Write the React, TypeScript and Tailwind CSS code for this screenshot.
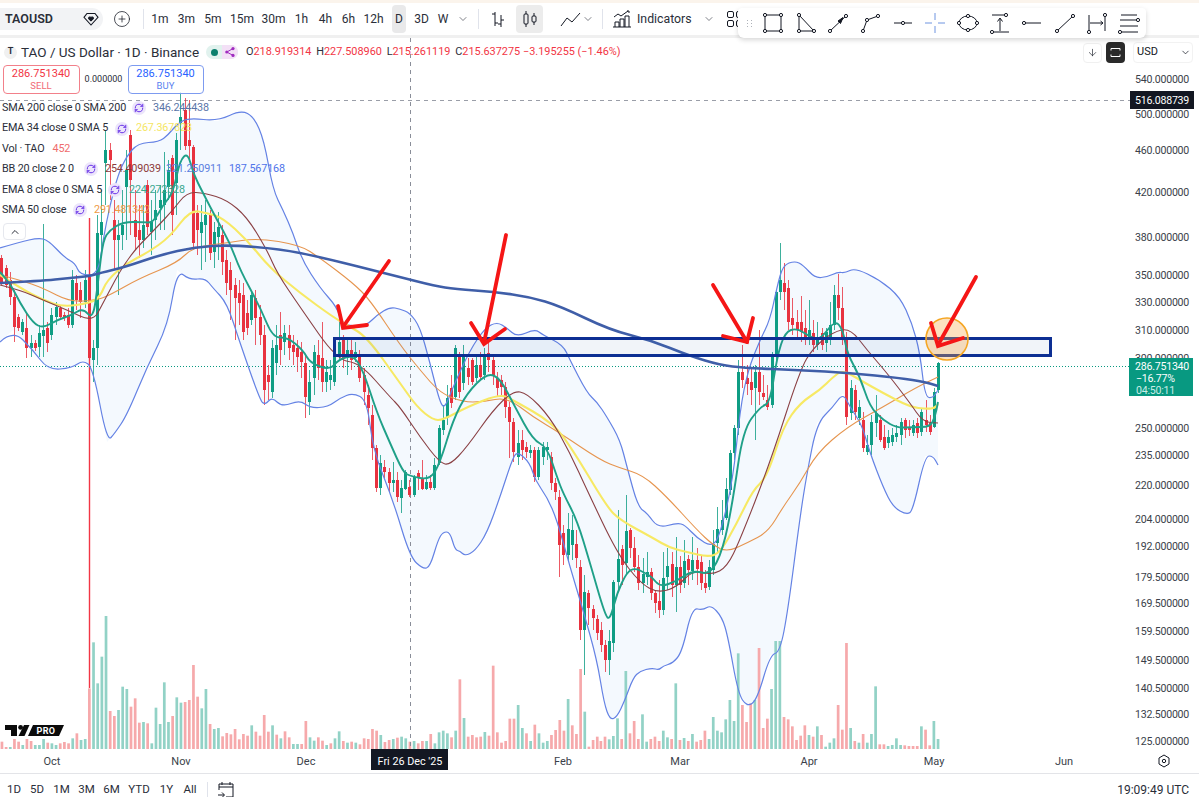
import { ChevronDown, ChevronUp, ArrowDown, CirclePlus, RefreshCw } from 'lucide-react'

const intervals = [
  { label: '1m', w: 'w-[26px]' },
  { label: '3m', w: 'w-[27px]' },
  { label: '5m', w: 'w-[26px]' },
  { label: '15m', w: 'w-[32px]' },
  { label: '30m', w: 'w-[31px]' },
  { label: '1h', w: 'w-[25px]' },
  { label: '4h', w: 'w-[23px]' },
  { label: '6h', w: 'w-[23px]' },
  { label: '12h', w: 'w-[27px]' },
  { label: 'D', w: 'w-[24px]', active: true },
  { label: '3D', w: 'w-[21px]' },
  { label: 'W', w: 'w-[22px]' },
]

const ranges = [
  { label: '1D', w: 'w-[22px]' },
  { label: '5D', w: 'w-[24px]' },
  { label: '1M', w: 'w-[25px]' },
  { label: '3M', w: 'w-[25px]' },
  { label: '6M', w: 'w-[25px]' },
  { label: 'YTD', w: 'w-[30px]' },
  { label: '1Y', w: 'w-[25px]' },
  { label: 'All', w: 'w-[22px]' },
]

const prices: [string, number][] = [
  ['540.000000', 79], ['500.000000', 114], ['460.000000', 150], ['420.000000', 192], ['380.000000', 237],
  ['350.000000', 275], ['330.000000', 302], ['310.000000', 330], ['300.000000', 358], ['250.000000', 428], ['235.000000', 455],
  ['220.000000', 485], ['204.000000', 519], ['192.000000', 546], ['179.500000', 577], ['169.500000', 603],
  ['159.500000', 631], ['149.500000', 660], ['140.500000', 688], ['132.500000', 714], ['125.000000', 741],
]

const months: [string, number][] = [
  ['Oct', 52], ['Nov', 181], ['Dec', 306], ['Feb', 563], ['Mar', 680], ['Apr', 809], ['May', 934], ['Jun', 1064],
]

// volume tops as read off the chart: positive = green bar, negative = red bar, 447 is the base line
const volLeft = [
  -425, -441, 441, -417, -425, 435, -417, -423, 435, 435, 417, -428, 430, 435, -430, -426, -430, 415, -400, 420, 417,
  -265, 127, 250, 170, 48, -333, -348, 330, 260, 267, -320, -295, -368, 366, -370, 430, 323, 372, 247, 366, -348, 292,
  308, -306, -300, -195, -290, 325, 267, -372, 387, 384, -409, -399, -403, -387, -418, -402, -407, 376, -395, -407,
  -345, -395, 376, -404, 415, -394, -412, 432, 432, -432, -363, 412, 422, -412, -422, 435, -430, 415, 394, -423, 428,
  -425, 428, -433, -415, -417, -387, -392, 405, -426, -420, 417, -413, 410, 415, -425, 423, -430, -423, 423, -402,
  430, 397, 392, 400, -412, 392, -238, 354, -410, -405, -412, -410, 396, -407, -197, -397, -428, -423, -356, -356,
  315, 384, -400, 423, -374, 400, 428, 423, -405, -390, -360, -392, 297, -376, -402, -207, 335, -440, -420, -410,
]
const volRight = [
  -423, -410, 418, 408, 355, -417, 213, -400, -363, -417, 343, 425, -417, -410, -423, 392, 412, -417, 250, -420, 414,
  -423, 402, -425, -420, -392, 417, 351, 392, 397, 358, 300, 363, 160, -315, -366, -310, 300, -144, -384, -356, 267,
  123, 123, -351, -358, -379, -420, -407, -376, 405, -410, 379, -405, 440, 428, 415, -315, -389, -129, 384, -423, 428,
  -402, 428, 402, 259, -433, -433, 438, 435, 415, 435, -436, -438, -438, -438, 379, -389, -436, 363, 417,
]

// [x, up, bodyTop, bodyBottom, wickTop, wickBottom]
const candles: number[][] = [
  [2,0,258,282],[6,0,268,285],[10,0,280,297,272,305],[15,0,297,327,290,342],[19,0,317,328],[23,1,322,332],[27,0,328,348,312,358],
  [31,1,343,348,335,357],[36,0,343,348],[39,1,333,347,325,357],[44,1,330,336,224,357],[48,0,328,343,322,352],[52,1,315,335,308,340],
  [56,1,307,317,302,325],[60,0,308,317],[65,0,315,318],[69,0,315,325,308,328],[73,1,280,325,270,328],[77,0,283,300,275,310],[81,0,290,302,282,318],
  [85,1,280,302,270,308],[90,0,277,358,218,688],[94,1,348,360,340,382],[98,1,233,348,215,365],[102,1,222,235,190,250],[107,1,150,163,130,205],
  [111,0,150,160,143,200],[115,0,220,240,200,270],[119,1,235,240,220,295],[123,1,225,235,190,250],[127,1,170,187,150,240],[131,0,135,180,130,235],
  [135,0,220,237,190,250],[140,0,230,240,205,258],[144,1,225,240,205,248],[148,0,185,227,180,235],[152,1,222,232,200,255],[156,1,210,220,190,240],
  [160,1,200,208,185,230],[164,1,190,205,152,230],[169,1,170,187,160,200],[173,0,158,215,155,235],[177,1,140,183,133,215],[182,1,117,123,92,150],
  [186,0,110,146,98,150],[190,0,140,146,100,160],[193,0,147,243,145,250],[197,0,213,230,205,255],[202,1,222,233,205,270],[206,1,215,225,200,262],
  [210,0,215,253,210,260],[214,1,232,252,222,268],[219,1,227,237,212,260],[223,0,235,262,225,275],[227,0,260,283,250,295],[231,0,270,290,262,320],
  [236,0,285,298,278,340],[240,0,293,303,280,325],[244,0,295,332,283,340],[249,0,313,328,300,335],[253,1,295,320,292,325],[257,0,298,318,290,345],
  [261,0,317,335,305,345],[265,0,335,390,325,405],[269,0,375,382,365,400],[273,1,348,392,340,398],[278,1,345,363,325,375],[281,0,335,350,312,365],
  [285,1,333,342,325,355],[290,0,335,348,325,360],[295,0,345,352,335,365],[299,0,348,357,340,372],[303,0,352,362,342,378],[306,0,363,397,355,418],
  [310,1,382,402,370,415],[314,1,352,378,345,395],[319,0,355,368,340,380],[323,0,358,382,322,392],[327,1,372,382,360,392],[332,1,375,380,360,390],
  [336,1,352,382,345,386],[340,1,342,355,322,360],[344,0,340,358,335,368],[348,1,350,358,337,375],[352,0,350,360,338,370],[356,1,352,358,342,362],
  [360,0,355,378,350,382],[364,0,375,392,368,405],[368,0,395,408,385,425],[372,0,415,448,405,460],[377,0,448,488,445,492],[381,1,463,488,455,495],
  [385,0,467,472,460,478],[389,0,472,483,468,492],[393,1,480,483,462,492],[397,0,480,497,472,502],[402,1,488,498,480,513],[406,1,472,489,470,490],
  [410,0,487,495,480,497],[414,1,477,495,475,497],[419,0,473,477,470,490],[423,0,478,489,460,490],[427,1,482,489,475,490],[431,0,482,488,475,490],
  [435,1,465,488,458,490],[439,1,428,463,425,465],[443,1,420,430,405,435],[448,1,398,418,385,425],[452,0,388,403,375,408],[456,1,348,397,345,400],
  [461,0,355,392,352,398],[464,1,355,383,345,390],[468,0,368,377,358,385],[472,0,360,382,358,385],[477,1,365,378,355,382],[481,0,365,377,352,380],
  [485,1,357,375,348,380],[489,0,353,360,343,372],[494,0,360,375,355,385],[498,0,378,388,372,397],[502,0,380,387,375,395],[506,0,387,407,382,418],
  [510,0,407,422,402,458],[514,0,422,452,418,462],[518,1,443,457,430,465],[522,0,440,450,430,460],[527,0,447,452,442,458],[531,1,450,453,445,458],
  [535,0,450,477,447,482],[539,1,450,477,447,480],[543,1,447,457,442,465],[547,1,447,450,442,460],[552,0,457,483,452,490],[556,0,483,492,478,500],
  [560,0,497,545,490,577],[564,0,533,555,525,565],[568,1,529,555,513,562],[572,1,530,545,515,560],[577,0,544,558,530,568],[581,0,567,630,560,640],
  [585,1,592,630,575,675],[589,0,593,608,590,625],[593,0,609,618,605,630],[597,0,619,633,615,640],[601,0,630,645,622,652],[606,0,645,660,640,672],
  [610,1,641,660,630,675],[614,1,582,643,580,652],[618,1,559,582,510,590],[622,0,549,565,545,585],[626,1,531,563,495,575],[630,0,530,548,528,558],
  [635,0,548,567,537,572],[639,0,567,583,555,590],[643,1,574,583,558,593],[647,1,572,577,552,585],[652,0,572,593,568,600],[656,0,593,603,590,613],
  [660,0,601,610,580,618],[664,1,578,610,552,615],[668,1,566,577,548,590],[672,0,564,585,552,597],[677,1,567,585,537,612],[681,0,567,585,556,593],
  [685,1,561,583,540,588],[689,0,559,570,555,585],[693,1,560,571,537,580],[697,0,560,569,548,585],[701,0,562,583,555,590],[706,0,583,588,570,593],
  [710,1,567,587,560,590],[714,1,544,570,530,575],[718,1,529,543,507,552],[722,1,520,530,500,535],[727,1,489,518,478,520],[731,1,453,490,450,495],
  [735,1,428,453,425,460],[739,1,372,428,360,435],[743,0,372,380,345,388],[747,0,378,384,365,395],[751,0,382,390,368,405],[755,1,372,388,365,440],
  [760,0,372,392,330,405],[764,0,393,397,375,400],[768,0,400,407,385,410],[772,1,357,405,352,408],[776,1,292,357,290,360],[780,1,280,292,243,300],
  [784,0,283,292,263,310],[788,0,288,322,280,330],[793,0,318,325,298,335],[797,0,322,330,310,340],[801,0,322,332,296,342],[805,0,328,337,310,345],
  [809,1,330,340,300,345],[813,0,333,345,320,352],[818,1,337,345,322,350],[822,0,333,345,328,350],[826,1,332,343,328,352],[830,1,325,337,302,345],
  [834,1,295,325,285,330],[838,0,295,308,274,320],[843,0,308,340,287,345],[847,0,340,417,332,425],[851,1,388,413,380,420],[855,0,390,412,385,420],
  [859,1,407,418,400,425],[863,0,420,448,412,452],[868,1,445,452,435,455],[872,1,422,445,415,455],[876,1,413,423,395,437],[880,0,420,440,415,442],
  [885,0,437,448,425,450],[889,1,437,443,430,448],[893,1,435,442,428,446],[897,1,433,437,425,442],[901,1,422,435,418,445],[905,0,420,430,418,438],
  [909,0,427,430,420,436],[914,1,425,433,420,436],[918,0,423,433,418,438],[922,1,412,432,408,436],[926,0,420,425,400,432],[930,0,423,432,415,435],
  [934,1,392,427,388,428],[938,1,363,390,362,393],
]

const fmt = (pts: string) => pts.trim().split(/\s+/)

// rounds the corners of the read-off points, midpoint to midpoint
function smooth(pts: string) {
  const p = fmt(pts).map((s) => s.split(',').map(Number))
  let d = `M${p[0][0]} ${p[0][1]}`
  for (let i = 1; i < p.length - 1; i++) {
    d += ` Q${p[i][0]} ${p[i][1]} ${(p[i][0] + p[i + 1][0]) / 2} ${(p[i][1] + p[i + 1][1]) / 2}`
  }
  const last = p[p.length - 1]
  return `${d} L${last[0]} ${last[1]}`
}

const bbUpper =
  '0,248 20,242 38,238 48,240 65,258 75,263 80,275 98,275 103,240 110,205 118,175 126,157 138,143 159,142 168,135 178,123 189,118 218,121 241,110 254,117 264,140 273,190 283,210 293,233 302,260 320,288 337,307 342,324 355,326 367,325 377,315 390,307 400,309 410,313 420,327 430,363 440,403 445,408 453,387 470,350 485,328 497,322 507,328 517,337 535,329 543,335 563,345 570,360 587,393 597,402 607,417 620,440 627,467 638,507 647,513 658,528 677,523 685,525 697,538 712,547 720,535 733,480 740,410 748,370 760,340 770,320 777,287 783,265 795,261 803,265 815,278 827,277 838,272 845,273 855,268 880,280 900,297 912,323 920,353 925,397 933,398 938,390'
const bbLower =
  '0,342 13,330 33,350 48,370 72,368 83,360 93,368 107,442 115,433 127,415 147,367 168,325 177,270 190,280 205,278 213,288 227,303 240,343 260,400 265,405 272,397 282,407 300,400 310,408 328,407 340,398 353,393 367,400 373,450 393,500 410,557 423,569 430,567 438,540 443,532 450,532 455,550 460,551 465,556 475,551 487,533 500,497 513,457 518,452 530,463 535,480 547,497 557,520 570,567 583,610 597,660 604,703 610,720 617,717 625,700 633,678 640,671 652,668 659,670 663,666 673,663 682,652 692,608 703,610 711,605 722,617 728,637 738,693 747,707 757,700 770,655 780,652 788,610 800,517 807,473 817,423 833,407 843,393 850,407 862,425 870,453 883,487 893,507 907,515 913,510 925,456 933,456 938,465'
const bbFill = `${bbUpper} ${fmt(bbLower).reverse().join(' ')}`

const sma200 =
  '0,283 40,281 70,278 90,276 100,273 125,267 160,255 195,247 230,245 280,249 320,257 400,277 435,286 455,289 495,292 530,297 560,306 610,330 650,340 690,356 720,365 745,368 800,370 850,373 900,378 925,382 938,386'
const ema8 =
  '0,272 10,283 20,303 33,323 43,328 57,320 72,315 83,308 93,320 98,283 103,240 110,230 123,222 143,222 153,223 163,205 173,193 180,160 188,153 193,173 203,193 217,220 230,243 240,270 260,307 273,338 287,337 303,350 310,363 330,370 338,360 353,355 363,370 377,413 390,443 403,472 410,476 430,480 440,463 453,420 467,393 487,373 500,378 515,407 533,440 547,447 557,477 563,493 577,520 590,563 605,615 610,620 617,593 627,572 635,568 645,573 652,577 660,587 677,581 693,570 710,575 723,550 733,500 743,430 760,407 770,403 777,357 785,332 797,328 810,337 820,340 835,320 843,330 847,353 860,377 870,407 883,420 897,428 913,427 930,427 935,417 938,402'
const ema34 =
  '0,275 20,288 43,300 63,307 90,303 100,297 107,280 127,263 147,253 170,237 190,210 207,213 223,218 247,240 270,268 300,293 333,317 347,325 367,337 400,383 417,407 433,420 443,420 467,407 500,394 513,400 553,423 573,450 607,507 620,520 653,538 670,548 687,552 708,557 720,553 737,523 753,490 767,477 783,427 800,403 820,390 833,377 843,370 860,380 883,393 910,407 927,409 935,408 938,404'
const bbBasis =
  '0,285 20,290 43,300 67,310 93,322 103,303 127,258 157,227 173,210 187,192 205,193 227,200 247,217 267,250 277,273 300,307 337,360 360,363 390,397 400,407 420,437 440,463 450,465 467,447 493,410 513,391 527,393 550,417 570,453 587,490 617,553 640,583 658,593 677,587 693,570 712,575 727,567 740,540 770,463 800,370 813,348 833,332 850,328 867,350 887,373 910,403 923,422 938,423'
const sma50 =
  '0,275 20,280 43,288 70,302 97,300 110,295 140,278 177,263 193,247 227,243 257,238 300,245 320,258 353,283 370,300 400,345 420,370 440,393 463,402 483,402 507,397 533,417 560,433 600,460 620,468 643,475 667,497 697,530 713,545 727,552 747,543 768,532 783,507 800,483 817,453 847,427 883,407 917,387 938,377'

const arrows = [
  ['389,261 343,327', '338,306 343,328 367,325'],
  ['506,235 484,343', '471,323 484,344 505,329'],
  ['713,285 747,342', '723,336 747,342 753,318'],
  ['976,277 938,345', '931,323 938,346 963,338'],
]

function snap(x: number) {
  return Math.floor(Math.round((x - 1.9) / 4.163) * 4.163 + 1.9) + 0.5
}

function Chart() {
  return (
    <svg width="1199" height="735" viewBox="0 38 1199 735" className="block" fontFamily="Roboto, sans-serif">
      <polygon points={bbFill} fill="#f4f9fe" />
      {volLeft.map((v, i) => (
        <rect key={i} x={0.6 + i * 4.163} y={600 + Math.abs(v) / 3} width="2.7" height={(447 - Math.abs(v)) / 3} fill={v > 0 ? '#92d2c6' : '#f6a9ab'} />
      ))}
      {volRight.map((v, i) => (
        <rect key={i} x={599.5 + i * 4.163} y={600 + Math.abs(v) / 3} width="2.7" height={(447 - Math.abs(v)) / 3} fill={v > 0 ? '#92d2c6' : '#f6a9ab'} />
      ))}
      <line x1="0" y1="366.5" x2="1130" y2="366.5" stroke="#089981" strokeWidth="1" strokeDasharray="1 2" />
      <line x1="410.5" y1="38" x2="410.5" y2="749" stroke="#8a8e99" strokeWidth="1" strokeDasharray="4 4" />
      <line x1="0" y1="100.5" x2="1130" y2="100.5" stroke="#9a9ea8" strokeWidth="1" strokeDasharray="4 4" />
      {candles.map(([x, up, t, b, wt, wb], i) => {
        const cx = snap(x)
        const c = up ? '#0f9d84' : '#e8323f'
        const long = (wb ?? 0) - (wt ?? 0) > 200
        return (
          <g key={i}>
            <line x1={cx} y1={wt ?? t - 3} x2={cx} y2={wb ?? b + 3} stroke={long ? '#f23645' : c} strokeWidth={long ? 1.4 : 1} opacity={long ? 1 : 0.8} />
            <rect x={cx - 1.5} y={t} width="3" height={Math.max(b - t, 1.5)} fill={c} />
          </g>
        )
      })}
      <path d={smooth(bbUpper)} fill="none" stroke="#6482e4" strokeWidth="1.2" />
      <path d={smooth(bbLower)} fill="none" stroke="#6482e4" strokeWidth="1.2" />
      <path d={smooth(sma50)} fill="none" stroke="#e6954f" strokeWidth="1.1" />
      <path d={smooth(ema34)} fill="none" stroke="#f7e964" strokeWidth="2.1" />
      <path d={smooth(bbBasis)} fill="none" stroke="#8a4044" strokeWidth="1.1" />
      <path d={smooth(ema8)} fill="none" stroke="#1fa088" strokeWidth="1.9" />
      <path d={smooth(sma200)} fill="none" stroke="#3f5ea8" strokeWidth="2.6" />
      <rect x="334.5" y="338.5" width="716" height="17" fill="#3f66b0" fillOpacity="0.07" stroke="#0d2f93" strokeWidth="3" />
      <circle cx="947" cy="339" r="21" fill="#f5a94a" fillOpacity="0.35" stroke="#f5a623" strokeWidth="1.6" />
      {arrows.map(([shaft, head], i) => (
        <g key={i} fill="none" stroke="#f51616" strokeWidth="3.8" strokeLinecap="round" strokeLinejoin="miter">
          <polyline points={shaft} />
          <polyline points={head} />
        </g>
      ))}
      <path d="M5 725h12v11h-6v-6H5z" fill="#0b0b0b" />
      <circle cx="20.6" cy="727.4" r="2.4" fill="#0b0b0b" />
      <path d="M24 725h5.5l-5 11h-6z" fill="#0b0b0b" />
      <path d="M33 725h31l-5 11H28z" fill="#0b0b0b" />
      <text x="46" y="734" fontSize="9" fontWeight="700" fill="#ffffff" textAnchor="middle" letterSpacing="0.4">PRO</text>
      {prices.map(([p, y]) => (
        <text key={p} x="1189" y={y + 4} fontSize="10.6" letterSpacing="-0.25" textAnchor="end" fill="#3b3f4a">{p}</text>
      ))}
      {months.map(([m, x]) => (
        <text key={m} x={x} y="765" fontSize="11" textAnchor="middle" fill="#3b3f4a">{m}</text>
      ))}
      <rect x="1130" y="91" width="64" height="18" fill="#131722" />
      <text x="1189" y="104" fontSize="10.6" letterSpacing="-0.25" textAnchor="end" fill="#ffffff">516.088739</text>
      <rect x="1129" y="358" width="64" height="38" fill="#089981" />
      <text x="1189" y="370" fontSize="10.6" letterSpacing="-0.25" textAnchor="end" fill="#ffffff">286.751340</text>
      <text x="1136" y="382" fontSize="10.6" letterSpacing="-0.25" fill="#ffffff">−16.77%</text>
      <text x="1136" y="394" fontSize="10.6" letterSpacing="-0.25" fill="#c8ece5">04:50:11</text>
      <rect x="371" y="749" width="77" height="21" fill="#131722" />
      <text x="410" y="765" fontSize="10.8" textAnchor="middle" fill="#ffffff">Fri 26 Dec '25</text>
      <g fill="none" stroke="#131722" strokeWidth="1">
        <path d="M1164 755l5 3v6l-5 3-5-3v-6z" />
        <circle cx="1164" cy="761" r="1.7" />
      </g>
    </svg>
  )
}

function Handle({ cx, cy }: { cx: number; cy: number }) {
  return <circle cx={cx} cy={cy} r="1.6" fill="#fff" />
}

function ToolIcon({ children }: { children: React.ReactNode }) {
  return (
    <div className="flex w-[32.4px] justify-center">
      <svg width="22" height="22" viewBox="0 0 22 22" fill="none" stroke="#131722" strokeWidth="1">
        {children}
      </svg>
    </div>
  )
}

function Tools() {
  return (
    <div className="absolute left-[738px] top-[5px] z-10 flex h-[30px] w-[408px] items-center rounded-b-md rounded-t-sm bg-white pl-[3px] shadow-[0_2px_5px_rgba(0,0,0,0.16)]">
      <div className="grid w-[16px] grid-cols-2 justify-items-center gap-y-[2px] px-[4px] opacity-40">
        {[0, 1, 2, 3, 4, 5].map((d) => (
          <span key={d} className="h-px w-px bg-gray-700" />
        ))}
      </div>
      <ToolIcon>
        <path d="M3 3h16v16H3z" />
        <Handle cx={3} cy={3} /><Handle cx={19} cy={3} /><Handle cx={3} cy={19} /><Handle cx={19} cy={19} />
      </ToolIcon>
      <ToolIcon>
        <path d="M4 3v16h15z" />
        <Handle cx={4} cy={3} /><Handle cx={4} cy={19} /><Handle cx={19} cy={19} />
      </ToolIcon>
      <ToolIcon>
        <path d="M3 19L19 4" />
        <path d="M11 9l5-3.5-2.5 6z" fill="#131722" />
        <Handle cx={3} cy={19} /><Handle cx={19} cy={4} />
      </ToolIcon>
      <ToolIcon>
        <path d="M4 19L8 8l11-4" />
        <Handle cx={4} cy={19} /><Handle cx={8} cy={8} /><Handle cx={19} cy={4} />
      </ToolIcon>
      <ToolIcon>
        <path d="M2 11h18" />
        <Handle cx={11} cy={11} />
      </ToolIcon>
      <ToolIcon>
        <path d="M1 11h7M14 11h7M11 1v7M11 14v7" stroke="#6f94e0" />
      </ToolIcon>
      <ToolIcon>
        <ellipse cx="11" cy="11" rx="9" ry="7" />
        <Handle cx={2} cy={11} /><Handle cx={20} cy={11} /><Handle cx={11} cy={4} /><Handle cx={11} cy={18} />
      </ToolIcon>
      <ToolIcon>
        <path d="M3 3h12M5 20h15M11 19V7M8.5 9.5L11 6l2.5 3.5" />
        <Handle cx={17} cy={3} /><Handle cx={3} cy={20} />
      </ToolIcon>
      <ToolIcon>
        <path d="M4 11h16" />
        <Handle cx={3} cy={11} />
      </ToolIcon>
      <ToolIcon>
        <path d="M3 19L19 4" />
        <Handle cx={3} cy={19} /><Handle cx={19} cy={4} />
      </ToolIcon>
      <ToolIcon>
        <path d="M3 3v16M19 5v14M4 11h13M14.5 9l2.5 2-2.5 2" />
        <Handle cx={3} cy={20} /><Handle cx={19} cy={3} />
      </ToolIcon>
      <ToolIcon>
        <path d="M3 3h16M2 8h16M2 14h18M4 20h16" />
        <Handle cx={20} cy={8} /><Handle cx={2} cy={20} />
      </ToolIcon>
    </div>
  )
}

function TopBar() {
  return (
    <div className="relative flex h-[38px] items-center border-t-[3px] border-b-[3px] border-t-[#fbf4ec] border-b-[#f0f0f0] bg-white text-[12px] text-[#2a2e39]">
      <div className="flex h-[22px] w-[103px] items-center justify-between rounded-r-full bg-[#f2f3f5] pl-[5px] pr-[3px]">
        <span className="text-[12.5px] font-semibold">TAOUSD</span>
        <svg width="18" height="18" viewBox="0 0 18 18" fill="none" stroke="#131722" strokeWidth="1.1">
          <path d="M5 3.5h8l3 3.8L9 15 2 7.3z" />
          <path d="M9 10.8L6.6 8.4a1.4 1.4 0 0 1 2.4-1 1.4 1.4 0 0 1 2.4 1z" fill="#131722" />
        </svg>
      </div>
      <CirclePlus size={18} strokeWidth={1} className="ml-[10px] text-[#131722]" />
      <div className="ml-[12px] h-[20px] w-px bg-[#e0e3eb]" />
      <div className="ml-[3px] flex items-center">
        {intervals.map((t) => (
          <div key={t.label} className={`${t.w} flex h-[28px] items-center justify-center`}>
            <span className={t.active ? 'flex h-[28px] w-[14px] items-center justify-center rounded-sm bg-[#e9e9ea]' : ''}>{t.label}</span>
          </div>
        ))}
      </div>
      <ChevronDown size={12} strokeWidth={1.2} className="ml-[3px]" />
      <div className="ml-[9px] h-[20px] w-px bg-[#e0e3eb]" />
      <svg width="20" height="20" viewBox="0 0 20 20" fill="none" stroke="#131722" className="ml-[9px]">
        <path d="M7 3v14M7 5H4M13 6v12M13 11h3M13 15h-3" />
        <path d="M7 14h3" />
      </svg>
      <div className="ml-[8px] flex h-[28px] w-[27px] items-center justify-center rounded bg-[#ececec]">
        <svg width="18" height="20" viewBox="0 0 18 20" fill="none" stroke="#131722">
          <path d="M5 2v3M5 15v3M13 4v3M13 13v3" />
          <rect x="3" y="5" width="4" height="10" rx="1" />
          <rect x="11" y="7" width="4" height="6" rx="1" />
        </svg>
      </div>
      <svg width="24" height="20" viewBox="0 0 24 20" fill="none" stroke="#131722" className="ml-[15px]">
        <path d="M3 17l6-8 5 4 8-9" />
      </svg>
      <ChevronDown size={12} strokeWidth={1.2} />
      <div className="ml-[8px] h-[20px] w-px bg-[#e0e3eb]" />
      <svg width="20" height="20" viewBox="0 0 20 20" fill="none" stroke="#131722" className="ml-[9px]">
        <path d="M2 8l4-3 3 2 7-5M15 2h2v2" />
        <path d="M3 18v-5h4v5M8 18V10h4v8M13 18V7h4v11M1 18h18" />
      </svg>
      <span className="ml-[5px] w-[53px] text-[12.3px]">Indicators</span>
      <ChevronDown size={12} strokeWidth={1.2} className="ml-[13px]" />
      <svg width="20" height="20" viewBox="0 0 20 20" fill="none" stroke="#131722" className="ml-[10px]">
        <rect x="2.5" y="2.5" width="6" height="6" rx="1.5" />
        <rect x="11.5" y="2.5" width="6" height="6" rx="1.5" />
        <rect x="2.5" y="11.5" width="6" height="6" rx="1.5" />
        <rect x="11.5" y="11.5" width="6" height="6" rx="1.5" />
      </svg>
      <div className="-mt-[3px]">
        <Tools />
      </div>
    </div>
  )
}

function Sync() {
  return (
    <span className="flex h-[14px] w-[14px] items-center justify-center rounded-full bg-[#ece5fb]">
      <RefreshCw size={10} strokeWidth={2.4} className="text-[#6a35e8]" />
    </span>
  )
}

function Legend() {
  return (
    <div className="absolute left-0 top-[6px] flex flex-col text-[12px] text-[#2a2e39]">
      <div className="flex h-[16px] items-center pl-[4px]">
        <span className="flex h-[13px] w-[13px] items-center justify-center rounded-full bg-[#f0f0f0] text-[9px] font-bold">T</span>
        <span className="ml-[4px] w-[181px] text-[13.5px]">TAO / US Dollar · 1D · Binance</span>
        <span className="ml-[4px] flex h-[14px] w-[32px] items-center rounded-full bg-[#e1f2ee]">
          <span className="ml-[5px] h-[7px] w-[7px] rounded-full bg-[#0a7f6d]" />
          <span className="ml-[4px] flex h-[14px] flex-1 items-center justify-center rounded-r-full bg-[#f3e0f6]">
            <svg width="10" height="10" viewBox="0 0 10 10" fill="#a02cc0">
              <circle cx="1.8" cy="5" r="1.6" /><circle cx="8" cy="1.6" r="1.6" /><circle cx="8" cy="8.4" r="1.6" />
              <path d="M1.8 5L8 1.6M1.8 5L8 8.4" stroke="#a02cc0" />
            </svg>
          </span>
        </span>
        <span className="ml-[8px] whitespace-nowrap text-[10.9px] text-[#f23645]">
          <span className="text-[#2a2e39]">O</span>218.919314 <span className="ml-[2px] text-[#2a2e39]">H</span>227.508960{' '}
          <span className="ml-[2px] text-[#2a2e39]">L</span>215.261119 <span className="ml-[2px] text-[#2a2e39]">C</span>215.637275 −3.195255 (−1.46%)
        </span>
      </div>
      <div className="ml-[2.5px] mt-[5px] flex h-[29px] items-center">
        <div className="flex h-[29px] w-[77px] flex-col items-center justify-center rounded border border-[#f2808a] bg-white/80 text-[#f23645]">
          <span className="text-[11px] leading-[13px]">286.751340</span>
          <span className="text-[9.5px] leading-[12px] text-[#f26b76]">SELL</span>
        </div>
        <span className="w-[48px] text-center text-[9px]">0.000000</span>
        <div className="flex h-[29px] w-[76px] flex-col items-center justify-center rounded border border-[#7d9bf0] bg-white/80 text-[#2962ff]">
          <span className="text-[11px] leading-[13px]">286.751340</span>
          <span className="text-[9.5px] leading-[12px] text-[#5a83f0]">BUY</span>
        </div>
      </div>
      <div className="ml-[2px] mt-[4px] flex flex-col text-[10.8px] tracking-[-0.15px]">
        <div className="flex h-[20.4px] items-center gap-[8px]">
          <span className="w-[122px] whitespace-nowrap">SMA 200 close 0 SMA 200</span><Sync />
          <span className="ml-[-1px] text-[#5a75a8]">346.244438</span>
        </div>
        <div className="flex h-[20.4px] items-center gap-[8px]">
          <span className="w-[105px] whitespace-nowrap">EMA 34 close 0 SMA 5</span><Sync />
          <span className="ml-[-1px] text-[#f5e663]">267.367828</span>
        </div>
        <div className="flex h-[20.4px] items-center gap-[8px]">
          <span>Vol · TAO</span>
          <span className="text-[#ef6c6c]">452</span>
        </div>
        <div className="flex h-[20.4px] items-center gap-[8px]">
          <span className="w-[74px] whitespace-nowrap">BB 20 close 2 0</span><Sync />
          <span className="ml-[-1px] text-[#8c3b3b]">254.409039</span>
          <span className="ml-[-3px] text-[#5b7fe0]">321.250911</span>
          <span className="ml-[-1px] text-[#4f74ea]">187.567168</span>
        </div>
        <div className="flex h-[20.4px] items-center gap-[8px]">
          <span className="w-[98px] whitespace-nowrap">EMA 8 close 0 SMA 5</span><Sync />
          <span className="ml-[-1px] text-[#3aa890]">224.272328</span>
        </div>
        <div className="flex h-[20.4px] items-center gap-[8px]">
          <span className="w-[63px] whitespace-nowrap">SMA 50 close</span><Sync />
          <span className="ml-[-1px] text-[#ee9a45]">291.481342</span>
        </div>
      </div>
      <div className="ml-[3px] mt-[3px] flex h-[17px] w-[23px] items-center justify-center rounded-sm border border-[#e6e8ee] bg-white">
        <ChevronUp size={12} strokeWidth={2} />
      </div>
    </div>
  )
}

function ScaleControls() {
  return (
    <div className="absolute right-[6px] top-[4px] flex items-center text-[12px] text-[#131722]">
      <div className="flex h-[20px] w-[19px] items-center justify-center rounded-sm border border-[#f0f0f0]">
        <ArrowDown size={11} strokeWidth={1.4} />
      </div>
      <div className="ml-[4px] flex h-[21px] w-[19px] items-center justify-center rounded bg-[#2a2a2a]">
        <svg width="11" height="11" viewBox="0 0 11 11" fill="none" stroke="#fff">
          <path d="M1 3.5V1.5h9v2M1 7.5v2h9v-2" />
        </svg>
      </div>
      <div className="ml-[8px] flex h-[21px] w-[60px] items-center justify-between rounded-sm border border-[#f2f2f2] pl-[3px] pr-[1px]">
        <span className="text-[11px]">USD</span>
        <ChevronDown size={11} strokeWidth={1.6} />
      </div>
    </div>
  )
}

function BottomBar() {
  return (
    <div className="flex h-[24px] items-center border-t border-[#e3e4e8] bg-white pt-[8px] text-[11.5px] text-[#2a2e39]">
      <div className="ml-[3px] flex">
        {ranges.map((r) => (
          <span key={r.label} className={`${r.w} text-center`}>{r.label}</span>
        ))}
      </div>
      <div className="ml-[6px] h-[16px] w-px bg-[#e0e3eb]" />
      <svg width="20" height="20" viewBox="0 0 20 20" fill="none" stroke="#131722" className="ml-[8px]">
        <path d="M3 10V4h14v13h-7M3 7h14M6 2v3M14 2v3M2 15h6M6 12.5L8.5 15 6 17.5" />
      </svg>
      <span className="ml-auto pr-[10px] text-[12px]">19:09:49 UTC</span>
    </div>
  )
}

export default function App() {
  return (
    <div className="h-[797px] w-[1199px] overflow-hidden bg-white font-['Roboto',sans-serif]">
      <TopBar />
      <div className="relative h-[735px]">
        <Chart />
        <Legend />
        <ScaleControls />
      </div>
      <BottomBar />
    </div>
  )
}
